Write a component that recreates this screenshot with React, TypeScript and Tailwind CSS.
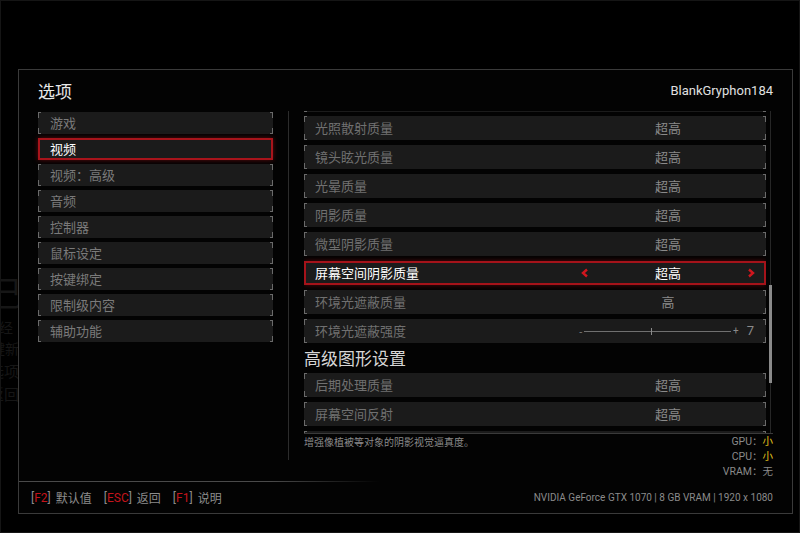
import React from 'react'

const menuItems = ['游戏', '视频', '视频：高级', '音频', '控制器', '鼠标设定', '按键绑定', '限制级内容', '辅助功能']

interface Setting {
  label: string
  value?: string
  selected?: boolean
  slider?: number
}

const videoSettings: Setting[] = [
  { label: '光照散射质量', value: '超高' },
  { label: '镜头眩光质量', value: '超高' },
  { label: '光晕质量', value: '超高' },
  { label: '阴影质量', value: '超高' },
  { label: '微型阴影质量', value: '超高' },
  { label: '屏幕空间阴影质量', value: '超高', selected: true },
  { label: '环境光遮蔽质量', value: '高' },
  { label: '环境光遮蔽强度', slider: 7 },
]

const advancedSettings: Setting[] = [
  { label: '后期处理质量', value: '超高' },
  { label: '屏幕空间反射', value: '超高' },
]

// little corner marks that frame each row
function Brackets() {
  return (
    <>
      <span className="absolute left-0 top-0 h-[6px] w-[3px] border-l border-t border-[#6a6a6a]" />
      <span className="absolute left-0 bottom-0 h-[6px] w-[3px] border-l border-b border-[#6a6a6a]" />
      <span className="absolute right-0 top-0 h-[6px] w-[3px] border-r border-t border-[#6a6a6a]" />
      <span className="absolute right-0 bottom-0 h-[6px] w-[3px] border-r border-b border-[#6a6a6a]" />
    </>
  )
}

function Chevron({ dir }: { dir: 'left' | 'right' }) {
  return (
    <svg width="8" height="10" viewBox="0 0 8 10">
      <polyline
        points={dir === 'left' ? '6,1.5 2,5 6,8.5' : '2,1.5 6,5 2,8.5'}
        fill="none"
        stroke="#d0161e"
        strokeWidth="2.4"
      />
    </svg>
  )
}

function SettingRow({ s }: { s: Setting }) {
  return (
    <div
      className={`relative flex h-[24px] shrink-0 items-center bg-[#1b1b1b] ${
        s.selected ? 'border-2 border-[#a5131a] shadow-[0_0_5px_rgba(180,20,25,0.45)]' : ''
      }`}
    >
      {!s.selected && <Brackets />}
      <span
        className={`flex-1 text-[13px] ${s.selected ? 'pl-[9px] text-white' : 'pl-[11px] text-[#707070]'}`}
      >
        {s.label}
      </span>
      {s.slider !== undefined ? (
        <div className="mr-[3px] flex w-[190px] items-center pl-[6px] text-[#8a8a8a]">
          <span className="w-[4px] text-[10px] leading-none">-</span>
          <div className="ml-[1px] h-px w-[67px] bg-[#707070]" />
          <div className="h-[7px] w-px bg-[#8a8a8a]" />
          <div className="h-px w-[79px] bg-[#707070]" />
          <span className="ml-[2px] font-['Roboto',sans-serif] text-[10px] leading-none">+</span>
          <span className="ml-[8px] font-['Roboto',sans-serif] text-[13px]">{s.slider}</span>
        </div>
      ) : s.selected ? (
        <div className="mr-[1px] flex w-[190px] items-center justify-between px-[8px]">
          <Chevron dir="left" />
          <span className="text-[13px] text-white">{s.value}</span>
          <Chevron dir="right" />
        </div>
      ) : (
        <div className="mr-[3px] w-[190px] text-center text-[13px] text-[#8a8a8a]">{s.value}</div>
      )}
    </div>
  )
}

export default function App() {
  return (
    <div className="relative h-[533px] w-[800px] overflow-hidden border border-[#151515] bg-black pl-[17px] pt-[68px] font-['Noto_Sans_CJK_SC',sans-serif]">
      {/* faint background text bleeding in from the left */}
      <div className="absolute left-[-12px] top-[266px] flex flex-col text-[#161616]">
        <span className="text-[34px] leading-[50px]">己</span>
        <span className="pl-[10px] text-[14px] leading-[21px]">经</span>
        <span className="pl-[2px] text-[14px] leading-[21px]">键新</span>
        <span className="text-[15px] leading-[23px]">选项</span>
        <span className="text-[15px] leading-[23px]">返回</span>
      </div>

      <div className="relative flex h-[445px] w-[775px] flex-col border border-[#3a3a3a] bg-[#030303]">
        {/* Header */}
        <div className="flex h-[41px] shrink-0 items-center justify-between px-[19px]">
          <span className="text-[17px] text-[#e8e8e8]">选项</span>
          <span className="font-['Roboto',sans-serif] text-[13px] text-[#e0e0e0]">BlankGryphon184</span>
        </div>

        {/* Body */}
        <div className="flex h-[370px] shrink-0 items-start pl-[19px] pr-[19px]">
          {/* Menu */}
          <div className="flex w-[235px] shrink-0 flex-col gap-[4px] pt-[1px]">
            {menuItems.map((item) => {
              const active = item === '视频'
              return (
                <div
                  key={item}
                  className={`relative flex h-[22px] items-center bg-[#1b1b1b] text-[13px] ${
                    active
                      ? 'border-2 border-[#a8141b] pl-[10px] text-white shadow-[0_0_5px_rgba(180,20,25,0.5)]'
                      : 'pl-[12px] text-[#7a7a7a]'
                  }`}
                >
                  {!active && <Brackets />}
                  {item}
                </div>
              )
            })}
          </div>

          <div className="ml-[15px] h-[349px] w-px shrink-0 bg-[#2c2c2c]" />

          {/* Settings list */}
          <div className="ml-[15px] flex flex-1 flex-col">
            <div className="flex h-[322px]">
              <div className="flex flex-1 flex-col gap-[5px] overflow-hidden">
                <div className="relative mb-[-1px] mt-[-23px] h-[24px] shrink-0 bg-[#1b1b1b]">
                  <Brackets />
                </div>
                {videoSettings.map((s) => (
                  <SettingRow key={s.label} s={s} />
                ))}
                <div className="h-[20px] shrink-0 text-[17px] leading-[20px] text-[#d6d6d6]">高级图形设置</div>
                {advancedSettings.map((s) => (
                  <SettingRow key={s.label} s={s} />
                ))}
                <div className="relative h-[24px] shrink-0 bg-[#1b1b1b]">
                  <Brackets />
                </div>
              </div>
              {/* scrollbar */}
              <div className="ml-[3px] mr-[1px] flex w-[3px] flex-col items-center">
                <div className="h-[174px] w-px bg-[#262626]" />
                <div className="h-[98px] w-[3px] bg-[#8a8a8a]" />
                <div className="w-px flex-1 bg-[#262626]" />
              </div>
            </div>
            <div className="h-px bg-[#3a3a3a]" />
            <div className="flex justify-between">
              <span className="text-[10px] leading-[15px] text-[#8a8a8a]">增强像植被等对象的阴影视觉逼真度。</span>
              <div className="flex flex-col items-end font-['Roboto','Noto_Sans_CJK_SC',sans-serif] text-[10.5px] leading-[15px] text-[#8a8a8a]">
                <span>
                  GPU：<span className="text-[#e2c21c]">小</span>
                </span>
                <span>
                  CPU：<span className="text-[#e2c21c]">小</span>
                </span>
                <span>VRAM：无</span>
              </div>
            </div>
          </div>
        </div>

        {/* Footer */}
        <div className="h-px w-[360px] shrink-0 bg-linear-to-r from-[#4a4a4a] from-70% to-transparent" />
        <div className="flex flex-1 items-center justify-between pl-[12px] pr-[19px] text-[12px]">
          <div className="flex items-center gap-[12px] text-[#8c8c8c]">
            <span className="flex items-center gap-[5px]">
              <span className="font-['Roboto',sans-serif]">
                [<span className="text-[#c4141c]">F2</span>]
              </span>
              默认值
            </span>
            <span className="flex items-center gap-[5px]">
              <span className="font-['Roboto',sans-serif]">
                [<span className="text-[#c4141c]">ESC</span>]
              </span>
              返回
            </span>
            <span className="flex items-center gap-[5px]">
              <span className="font-['Roboto',sans-serif]">
                [<span className="text-[#c4141c]">F1</span>]
              </span>
              说明
            </span>
          </div>
          <span className="font-['Roboto',sans-serif] text-[10px] text-[#8a8a8a]">
            NVIDIA GeForce GTX 1070 | 8 GB VRAM | 1920 x 1080
          </span>
        </div>
      </div>
    </div>
  )
}
